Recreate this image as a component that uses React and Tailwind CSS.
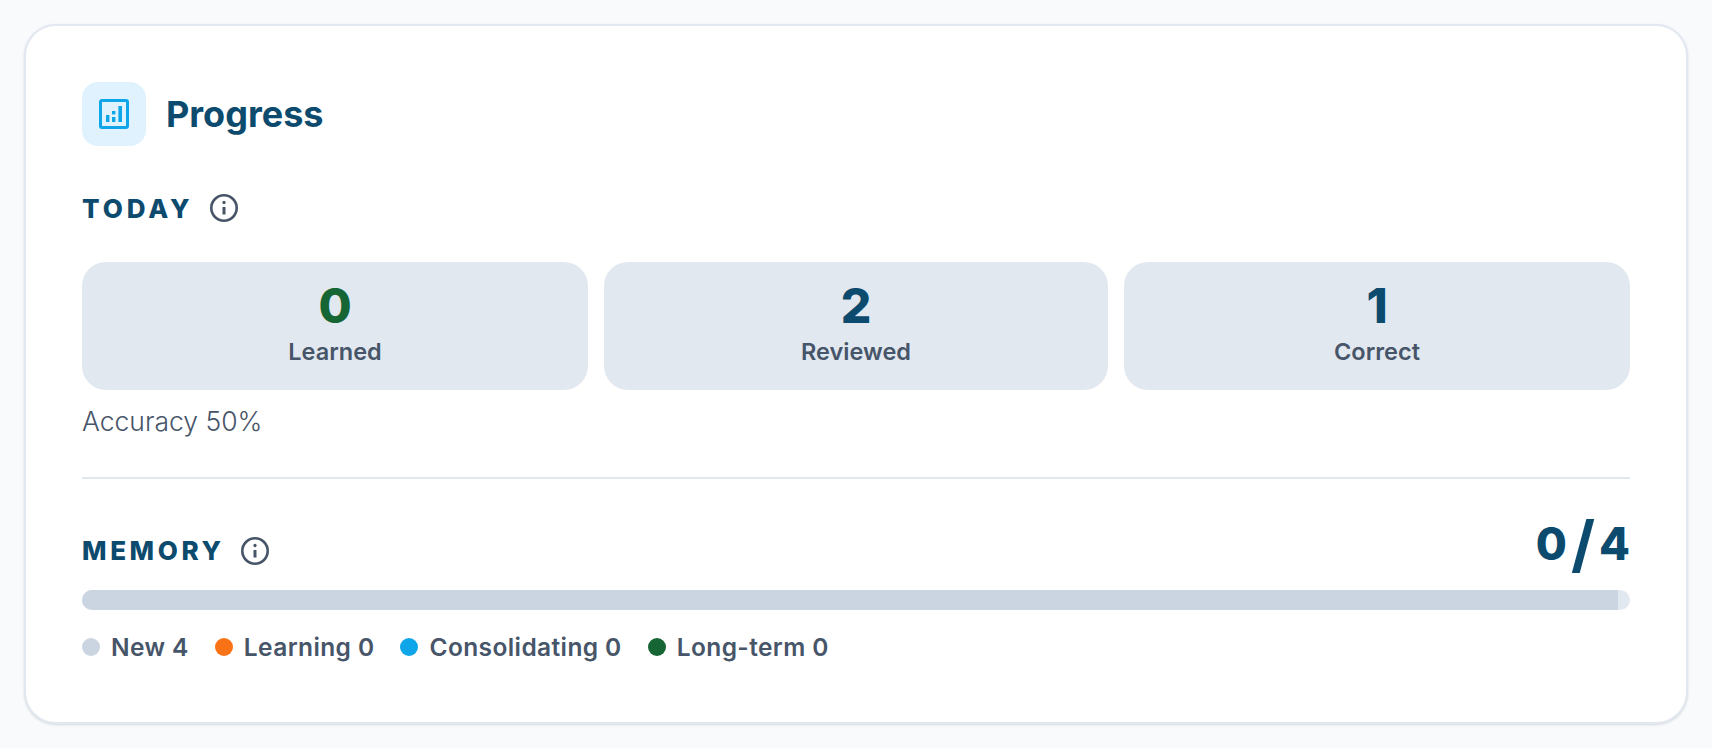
import React from 'react';

const FONT = "font-['Inter','Liberation_Sans',sans-serif]";

const STATS = [
    { value: '0', label: 'Learned', color: 'text-[#166534]' },
    { value: '2', label: 'Reviewed', color: 'text-[#0c4a6e]' },
    { value: '1', label: 'Correct', color: 'text-[#0c4a6e]' },
];

const LEGEND = [
    { label: 'New 4', color: 'bg-[#cbd5e1]' },
    { label: 'Learning 0', color: 'bg-[#f97316]' },
    { label: 'Consolidating 0', color: 'bg-[#0ea5e9]' },
    { label: 'Long-term 0', color: 'bg-[#166534]' },
];

const InfoIcon = () => (
    <svg width="30" height="30" viewBox="0 0 30 30" fill="none" stroke="#475569" strokeWidth="2.6" strokeLinecap="round">
        <circle cx="15" cy="15" r="12.7" />
        <path d="M15 14v7.5" strokeWidth="3" strokeLinecap="butt" />
        <path d="M15 9.4v.2" strokeWidth="3.2" />
    </svg>
);

const ChartIcon = () => (
    <svg width="32" height="32" viewBox="0 0 32 32" fill="none">
        <rect x="2.5" y="2.5" width="27" height="27" rx="1.5" stroke="#0ea5e9" strokeWidth="3" />
        <rect x="8" y="17" width="3.4" height="7" fill="#0ea5e9" />
        <rect x="14" y="13" width="3.4" height="3.4" fill="#0ea5e9" />
        <rect x="14" y="19" width="3.4" height="5" fill="#0ea5e9" />
        <rect x="20.4" y="8" width="3.6" height="16" fill="#0ea5e9" />
    </svg>
);

const App = () => {
    return (
        <div className={`${FONT} min-h-[748px] bg-[#f8fafc] p-6`}>
            <div className="h-[700px] rounded-[32px] border-2 border-[#e2e8f0] bg-white p-14 shadow-sm">
                <div className="flex items-center gap-5">
                    <div className="flex h-16 w-16 items-center justify-center rounded-2xl bg-[#e0f2fe]">
                        <ChartIcon />
                    </div>
                    <h2 className="text-[36px] leading-none font-bold text-[#0c4a6e]">Progress</h2>
                </div>

                <div className="mt-[44px] flex h-9 items-center gap-4">
                    <h3 className="text-[26px] font-extrabold tracking-[3.9px] text-[#0c4a6e]">TODAY</h3>
                    <InfoIcon />
                </div>

                <div className="mt-[36px] grid grid-cols-[1fr_504px_1fr] gap-4">
                    {STATS.map((stat) => (
                        <div key={stat.label} className="flex h-32 flex-col items-center justify-center rounded-3xl bg-[#e2e8f0] pb-2">
                            <div className={`text-[48px] leading-[60px] font-extrabold ${stat.color}`}>{stat.value}</div>
                            <div className="text-[23.5px] leading-8 font-semibold text-[#475569]">{stat.label}</div>
                        </div>
                    ))}
                </div>

                <p className="mt-[15px] text-[26.5px] leading-8 font-light text-[#475569]">Accuracy 50%</p>

                <div className="mt-[40px] border-t-2 border-[#e2e8f0]" />

                <div className="mt-[35px] flex h-14 items-center justify-between">
                    <div className="flex items-center gap-[15px] pt-[17px]">
                        <h3 className="text-[26px] font-extrabold tracking-[3.6px] text-[#0c4a6e]">MEMORY</h3>
                        <InfoIcon />
                    </div>
                    <div className="flex items-center gap-1 pt-[3px] text-[45px] leading-none font-extrabold text-[#0c4a6e]">
                        <span>0</span>
                        <span className="text-[62px] font-bold">/</span>
                        <span>4</span>
                    </div>
                </div>

                <div className="mt-5 h-5 overflow-hidden rounded-full bg-[#e2e8f0]">
                    <div className="h-full w-[1536px] bg-[#cbd5e1]" />
                </div>

                <div className="mt-[21px] flex items-center gap-[26px]">
                    {LEGEND.map((item) => (
                        <div key={item.label} className="flex items-center gap-[11px]">
                            <span className={`h-[18px] w-[18px] rounded-full ${item.color}`} />
                            <span className="text-[24.5px] leading-8 font-semibold tracking-[0.4px] text-[#475569]">{item.label}</span>
                        </div>
                    ))}
                </div>
            </div>
        </div>
    );
};

export default App;
